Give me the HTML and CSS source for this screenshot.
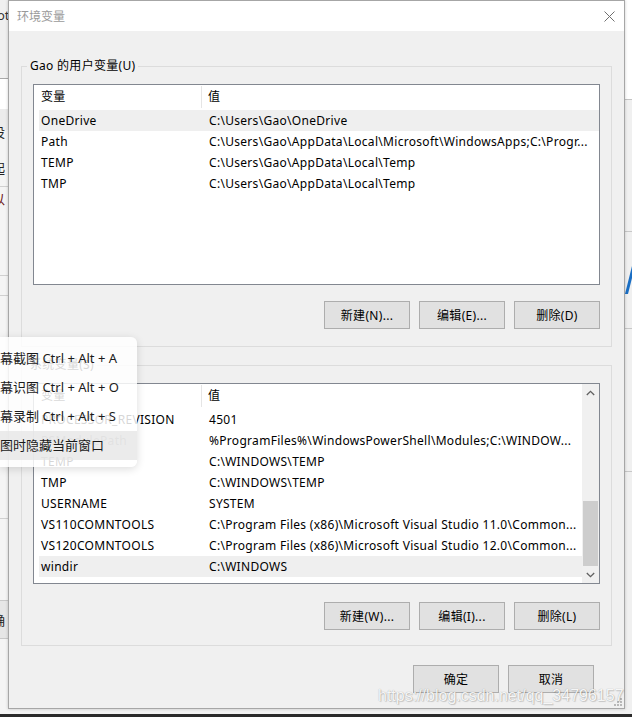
FILE: index.html
```html
<!DOCTYPE html>
<html lang="zh-CN">
<head>
  <meta charset="UTF-8" />
  <title>环境变量</title>
  <link rel="stylesheet" href="styles.css">
</head>
<body>
  <div class="back-left">
    <div class="bl-top"><span class="bl-text">ot</span></div>
    <div class="bl-white"></div>
    <div class="bl-band"></div>
    <div class="bl-cjk bl-she">设</div>
    <div class="bl-cjk bl-qi">起</div>
    <div class="bl-line bl-gap1"></div>
    <div class="bl-cjk bl-yi">以</div>
    <div class="bl-line bl-gap2"></div>
    <div class="bl-line bl-gap3"></div>
    <div class="bl-line bl-gap4"></div>
    <div class="bl-ok">确</div>
  </div>

  <div class="back-right">
    <div class="br-top"></div>
    <div class="br-line br-gap1"></div>
    <div class="br-slash"></div>
    <div class="br-line br-gap2"></div>
    <div class="br-line br-gap3"></div>
  </div>

  <div class="taskbar"></div>

  <div class="dialog">
    <div class="titlebar">
      <span class="title">环境变量</span>
      <svg class="close" width="11" height="11" viewBox="0 0 11 11">
        <path d="M0.5 0.5 L10.5 10.5 M10.5 0.5 L0.5 10.5" stroke="#6f6f6f" stroke-width="1" fill="none"/>
      </svg>
    </div>

    <div class="dialog-body">
      <fieldset class="group group-user">
        <legend>Gao 的用户变量(U)</legend>
        <div class="listbox">
          <div class="list-main">
            <div class="list-head">
              <span class="head-name">变量</span>
              <span class="head-value">值</span>
            </div>
            <div class="row selected"><span class="cell-name">OneDrive</span><span class="cell-value">C:\Users\Gao\OneDrive</span></div>
            <div class="row"><span class="cell-name">Path</span><span class="cell-value">C:\Users\Gao\AppData\Local\Microsoft\WindowsApps;C:\Progr...</span></div>
            <div class="row"><span class="cell-name">TEMP</span><span class="cell-value">C:\Users\Gao\AppData\Local\Temp</span></div>
            <div class="row"><span class="cell-name">TMP</span><span class="cell-value">C:\Users\Gao\AppData\Local\Temp</span></div>
          </div>
        </div>
        <div class="btn-row">
          <button class="btn">新建(N)...</button>
          <button class="btn">编辑(E)...</button>
          <button class="btn">删除(D)</button>
        </div>
      </fieldset>

      <fieldset class="group group-system">
        <legend>系统变量(S)</legend>
        <div class="listbox">
          <div class="list-main">
            <div class="list-head">
              <span class="head-name">变量</span>
              <span class="head-value">值</span>
            </div>
            <div class="row"><span class="cell-name">PROCESSOR_REVISION</span><span class="cell-value">4501</span></div>
            <div class="row"><span class="cell-name">PSModulePath</span><span class="cell-value">%ProgramFiles%\WindowsPowerShell\Modules;C:\WINDOW...</span></div>
            <div class="row"><span class="cell-name">TEMP</span><span class="cell-value">C:\WINDOWS\TEMP</span></div>
            <div class="row"><span class="cell-name">TMP</span><span class="cell-value">C:\WINDOWS\TEMP</span></div>
            <div class="row"><span class="cell-name">USERNAME</span><span class="cell-value">SYSTEM</span></div>
            <div class="row"><span class="cell-name">VS110COMNTOOLS</span><span class="cell-value">C:\Program Files (x86)\Microsoft Visual Studio 11.0\Common...</span></div>
            <div class="row"><span class="cell-name">VS120COMNTOOLS</span><span class="cell-value">C:\Program Files (x86)\Microsoft Visual Studio 12.0\Common...</span></div>
            <div class="row selected"><span class="cell-name">windir</span><span class="cell-value">C:\WINDOWS</span></div>
          </div>
          <div class="scrollbar">
            <div class="sb-arrow">
              <svg width="9" height="6" viewBox="0 0 9 6"><path d="M0.8 5 L4.5 1.3 L8.2 5" stroke="#606060" stroke-width="1.3" fill="none"/></svg>
            </div>
            <div class="sb-track"><div class="sb-thumb"></div></div>
            <div class="sb-arrow">
              <svg width="9" height="6" viewBox="0 0 9 6"><path d="M0.8 1 L4.5 4.7 L8.2 1" stroke="#606060" stroke-width="1.3" fill="none"/></svg>
            </div>
          </div>
        </div>
        <div class="btn-row">
          <button class="btn">新建(W)...</button>
          <button class="btn">编辑(I)...</button>
          <button class="btn">删除(L)</button>
        </div>
      </fieldset>

      <div class="dialog-actions">
        <button class="btn">确定</button>
        <button class="btn">取消</button>
      </div>
    </div>

    <svg class="grip" width="10" height="10" viewBox="0 0 10 10">
      <rect x="8" y="2" width="2" height="2" fill="#b8b8b8"/>
      <rect x="5" y="5" width="2" height="2" fill="#b8b8b8"/>
      <rect x="8" y="5" width="2" height="2" fill="#b8b8b8"/>
      <rect x="2" y="8" width="2" height="2" fill="#b8b8b8"/>
      <rect x="5" y="8" width="2" height="2" fill="#b8b8b8"/>
      <rect x="8" y="8" width="2" height="2" fill="#b8b8b8"/>
    </svg>
  </div>

  <div class="popup-menu">
    <div class="menu-item">幕截图 Ctrl + Alt + A</div>
    <div class="menu-item">幕识图 Ctrl + Alt + O</div>
    <div class="menu-item">幕录制 Ctrl + Alt + S</div>
    <div class="menu-item hover">图时隐藏当前窗口</div>
  </div>

  <div class="watermark">https://blog.csdn.net/qq_34796157</div>
</body>
</html>
```

FILE: styles.css
```css
* { box-sizing: border-box; margin: 0; padding: 0; }
html, body { width: 632px; height: 717px; overflow: hidden; }
body { position: relative; background: #f2f2f2; font-family: "Noto Sans", "Noto Sans CJK SC", sans-serif; font-size: 12px; color: #000; }

/* windows behind the dialog */
.back-left { position: absolute; left: 0; top: 0; width: 20px; height: 714px; background: #f4f4f4; overflow: hidden; }
.bl-top { height: 79px; border-bottom: 1px solid #a9a9a9; background: #f0f0f0; }
.bl-text { display: block; margin-left: -3px; padding-top: 6px; font-size: 13px; color: #333; }
.bl-white { height: 30px; background: #fff; }
.bl-band { height: 21px; background: #ececec; }
.bl-cjk { margin-left: -8px; font-size: 13px; line-height: 20px; color: #222; }
.bl-she { margin-top: -8px; }
.bl-qi { margin-top: 16px; }
.bl-yi { color: #6a1010; margin-top: 2px; }
.bl-line { border-top: 1px solid #d0d0d0; }
.bl-gap1 { margin-top: 8px; }
.bl-gap2 { margin-top: 66px; }
.bl-gap3 { margin-top: 19px; }
.bl-gap4 { margin-top: 222px; }
.bl-ok { margin-top: 81px; margin-left: -8px; height: 39px; line-height: 39px; border-top: 1px solid #c8c8c8; border-bottom: 1px solid #c8c8c8; background: #e6e6e6; font-size: 13px; color: #222; }

.back-right { position: absolute; left: 620px; top: 0; width: 12px; height: 714px; background: #f0f0f0; overflow: hidden; }
.br-top { height: 100px; background: #fff; border-bottom: 1px solid #c4c4c4; }
.br-line { border-top: 1px solid #c8c8c8; }
.br-gap1 { margin-top: 131px; }
.br-slash { width: 3px; height: 32px; margin: 30px 0 0 9px; background: #1a6ec4; transform: skewX(-14deg); }
.br-gap2 { margin-top: 34px; }
.br-gap3 { margin-top: 142px; }

.taskbar { position: absolute; left: 0; top: 714px; width: 632px; height: 3px; background: #2b2b2b; }

/* dialog window */
.dialog { position: absolute; left: 8px; top: 0; width: 617px; height: 709px; border: 1px solid #a6a6a6; background: #f0f0f0; box-shadow: 0 0 3px rgba(0,0,0,0.2); }
.titlebar { height: 30px; background: #fff; display: flex; align-items: center; justify-content: space-between; padding: 0 9px 0 8px; }
.title { color: #9a9a9a; font-size: 12px; }
.close { margin-top: 1px; }

.dialog-body { padding: 27px 12px 0 12px; letter-spacing: 0.3px; }

.group { border: 1px solid #dcdcdc; padding: 10px 11px 17px; min-width: 0; }
.group legend { margin-left: -6px; padding: 0 3px; line-height: 16px; font-size: 12px; }
.group-system { margin-top: 10px; padding-bottom: 15px; }

.listbox { display: flex; height: 201px; border: 1px solid #828790; background: #fff; }
.list-main { flex: 1; min-width: 0; overflow: hidden; }
.list-head { display: flex; height: 25px; line-height: 24px; }
.head-name { width: 168px; padding-left: 7px; border-right: 1px solid #e5e5e5; margin: 1px 0 2px; line-height: 22px; }
.head-value { padding-left: 6px; }
.row { display: flex; height: 21px; line-height: 21px; margin-left: 5px; white-space: nowrap; }
.row.selected { background: #efefef; }
.cell-name { width: 163px; flex: none; padding-left: 2px; }
.cell-value { flex: 1; padding-left: 7px; overflow: hidden; }

.scrollbar { width: 17px; display: flex; flex-direction: column; background: #f0f0f0; }
.sb-arrow { height: 17px; display: flex; align-items: center; justify-content: center; }
.sb-track { flex: 1; display: flex; flex-direction: column; justify-content: flex-end; }
.sb-thumb { height: 65px; margin: 0 1px; background: #cdcdcd; }

.btn-row { display: flex; justify-content: flex-end; gap: 9px; margin-top: 16px; }
.group-system .btn-row { margin-top: 18px; }
.btn { width: 86px; height: 28px; background: #e1e1e1; border: 1px solid #adadad; font-family: "Noto Sans", "Noto Sans CJK SC", sans-serif; font-size: 12px; letter-spacing: 0.3px; color: #000; }

.dialog-actions { display: flex; justify-content: flex-end; gap: 9px; margin-top: 19px; padding-right: 18px; }

.grip { position: absolute; right: 2px; bottom: 2px; }

/* screenshot tool menu over the dialog */
.popup-menu { position: absolute; left: 0; top: 337px; width: 137px; height: 130px; padding: 7px 0; background: rgba(255,255,255,0.84); border-radius: 0 6px 6px 0; box-shadow: 0 2px 8px rgba(0,0,0,0.14); }
.menu-item { height: 29px; line-height: 29px; font-size: 13px; color: #1a1a1a; white-space: nowrap; }
.menu-item.hover { background: rgba(228,228,228,0.75); }

.watermark { position: absolute; left: 378px; top: 687px; font-family: "Liberation Sans", Arial, sans-serif; font-size: 16px; color: rgba(255,255,255,0.92); text-shadow: 0 0 1px rgba(0,0,0,0.35), 1px 1px 1px rgba(0,0,0,0.15); white-space: nowrap; }
```
